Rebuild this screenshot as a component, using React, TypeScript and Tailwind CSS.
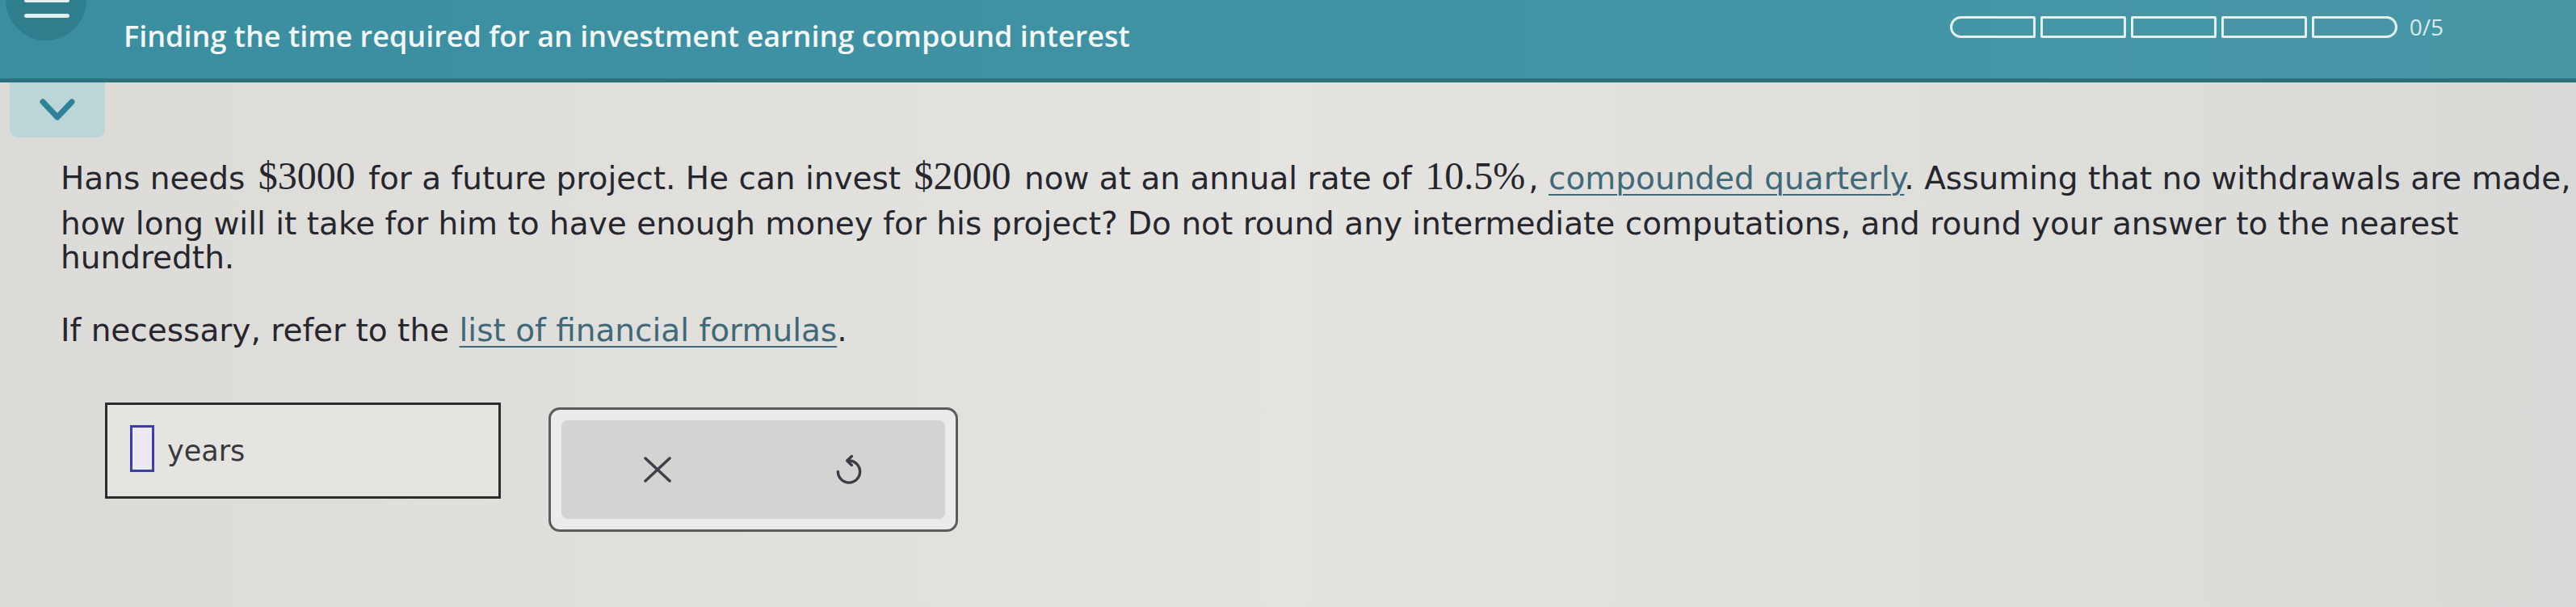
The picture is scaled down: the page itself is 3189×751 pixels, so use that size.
import type { ReactNode } from 'react';

const serif = { fontFamily: '"Liberation Serif", "Times New Roman", serif' };

function M({ children }: { children: ReactNode }) {
  return (
    <span className="text-[48px] mx-[4px]" style={serif}>
      {children}
    </span>
  );
}

function ProgressBar() {
  const segs = [0, 1, 2, 3, 4];
  return (
    <div className="flex items-center gap-[6px]">
      {segs.map((i) => (
        <div
          key={i}
          className={`h-[27px] w-[106px] border-[3px] border-[#e4f0f0] ${
            i === 0 ? 'rounded-l-[14px] rounded-r-[2px]' : i === 4 ? 'rounded-r-[14px] rounded-l-[2px]' : 'rounded-[2px]'
          }`}
        />
      ))}
    </div>
  );
}

function UndoIcon() {
  return (
    <svg width="34" height="40" viewBox="2 1 20 23" fill="none" stroke="#3a3d44" strokeWidth="2" strokeLinecap="round" strokeLinejoin="round">
      <path d="M4 14 A8 8 0 1 0 12 6" />
      <path d="M14 2.8 L10.6 6 L14 9.2" />
    </svg>
  );
}

export default function App() {
  return (
    <div
      className="relative w-[3189px] h-[751px] overflow-hidden bg-gradient-to-r from-[#dddbd7] via-[#e5e3e0] to-[#d9dad7] text-[#26262e]"
      style={{ fontFamily: '"DejaVu Sans", Verdana, sans-serif' }}
    >
      {/* top bar */}
      <header className="relative h-[102px] bg-gradient-to-r from-[#3a8ea0] to-[#4797a7] border-b-[5px] border-[#2c6f7f] flex items-start pl-[153px] pr-[164px]">
        <div className="absolute left-[7px] top-[-50px] w-[100px] h-[100px] rounded-full bg-[#2f7e8d]">
          <div className="absolute left-[23px] top-[48px] w-[56px] h-[5px] rounded-full bg-[#e3efef]" />
          <div className="absolute left-[23px] top-[67px] w-[56px] h-[5px] rounded-full bg-[#e3efef]" />
        </div>
        <h1
          className="pt-[24px] text-[36px] font-semibold leading-[42px] text-[#f2f7f7]"
          style={{ fontFamily: '"Open Sans", sans-serif' }}
        >
          Finding the time required for an investment earning compound interest
        </h1>
        <div className="ml-auto pt-[20px] flex items-center">
          <ProgressBar />
          <span className="ml-[15px] text-[28px] leading-[27px] text-[#d8ebeb]" style={{ fontFamily: '"Open Sans", sans-serif' }}>
            0/5
          </span>
        </div>
      </header>

      {/* collapse tab */}
      <div className="ml-[12px] w-[118px] h-[68px] rounded-b-[10px] bg-[#bcd6d8] flex items-center justify-center">
        <svg width="46" height="30" viewBox="0 0 46 30" fill="none" stroke="#2e8398" strokeWidth="7" strokeLinecap="round" strokeLinejoin="round">
          <path d="M5 5 L23 24 L41 5" />
        </svg>
      </div>

      {/* question */}
      <div className="pl-[75px] mt-[12px] text-[39px] whitespace-nowrap">
        <div className="h-[72px] flex items-center">
          <span>
            Hans needs <M>$3000</M> for a future project. He can invest <M>$2000</M> now at an annual rate of <M>10.5%</M>,{' '}
            <span className="text-[#3f6978] underline decoration-2 underline-offset-[6px]">compounded quarterly</span>. Assuming that no
            withdrawals are made,
          </span>
        </div>
        <div className="leading-[42px] mt-[2px]">
          how long will it take for him to have enough money for his project? Do not round any intermediate computations, and round your
          answer to the nearest
        </div>
        <div className="leading-[42px]">hundredth.</div>
        <div className="leading-[42px] mt-[48px]">
          If necessary, refer to the{' '}
          <span className="text-[#3f6978] underline decoration-2 underline-offset-[6px]">list of financial formulas</span>.
        </div>
      </div>

      {/* answer row */}
      <div className="mt-[68px] ml-[130px] flex items-start gap-[59px]">
        <div className="w-[490px] h-[119px] border-[3px] border-[#2d2b2e] bg-[#e6e4e1] flex items-start pl-[28px] pt-[25px]">
          <div className="w-[30px] h-[58px] border-[3px] border-[#3c3cae] bg-[#eceaf0]" />
          <span className="ml-[16px] mt-[12px] text-[35px] leading-[40px] text-[#3a3a3e]">years</span>
        </div>
        <div className="mt-[6px] w-[507px] h-[154px] rounded-[14px] border-[3px] border-[#5c5c5e] bg-[#ecebe9] p-[13px]">
          <div className="h-full rounded-[8px] bg-[#d3d3d2] grid grid-cols-2 items-center justify-items-center">
            <svg width="34" height="32" viewBox="0 0 34 32" fill="none" stroke="#3c4048" strokeWidth="3.5" strokeLinecap="round">
              <path d="M2 2 L32 30 M32 2 L2 30" />
            </svg>
            <UndoIcon />
          </div>
        </div>
      </div>
    </div>
  );
}
